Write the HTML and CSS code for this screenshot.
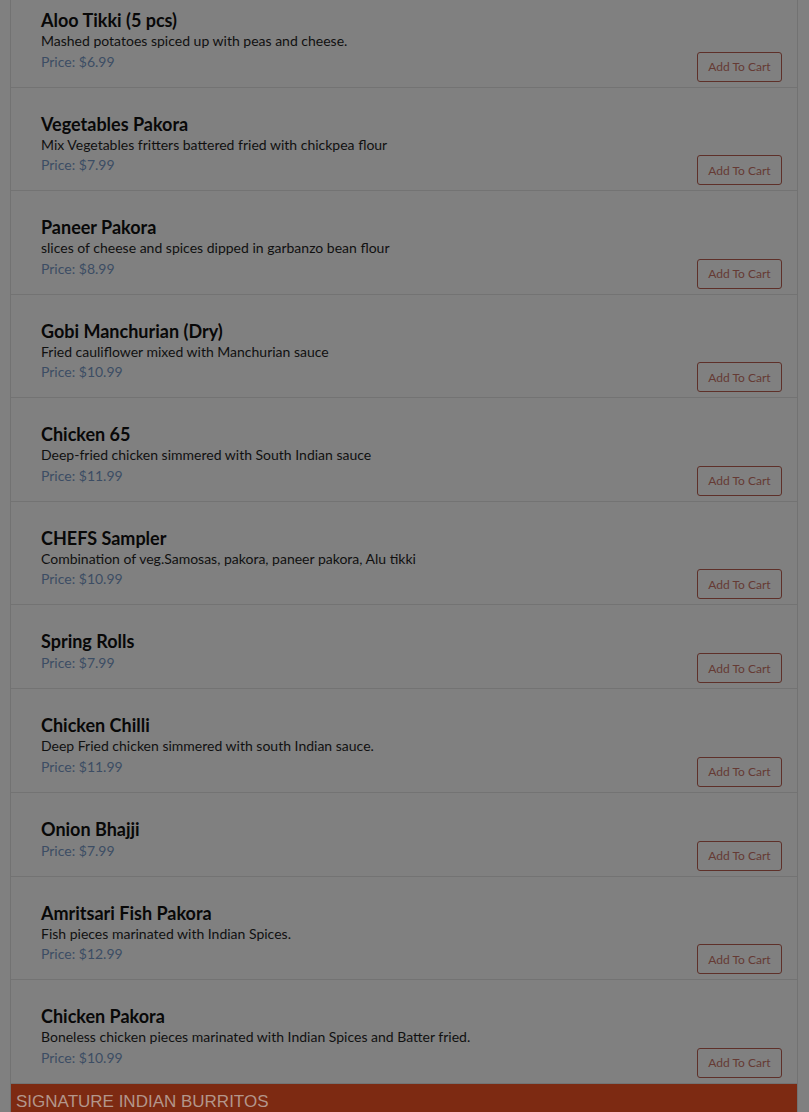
FILE: index.html
```html
<!DOCTYPE html>
<html lang="en">
<head>
<meta charset="utf-8">
<title>Menu</title>
<link rel="stylesheet" href="styles.css">
</head>
<body>
<main class="menu">
  <section class="items">
    <article class="item">
      <div class="info">
        <h3 class="name">Aloo Tikki (5 pcs)</h3>
        <p class="desc">Mashed potatoes spiced up with peas and cheese.</p>
        <p class="price">Price: $6.99</p>
      </div>
      <button class="add">Add To Cart</button>
    </article>
    <article class="item">
      <div class="info">
        <h3 class="name">Vegetables Pakora</h3>
        <p class="desc">Mix Vegetables fritters battered fried with chickpea flour</p>
        <p class="price">Price: $7.99</p>
      </div>
      <button class="add">Add To Cart</button>
    </article>
    <article class="item">
      <div class="info">
        <h3 class="name">Paneer Pakora</h3>
        <p class="desc">slices of cheese and spices dipped in garbanzo bean flour</p>
        <p class="price">Price: $8.99</p>
      </div>
      <button class="add">Add To Cart</button>
    </article>
    <article class="item">
      <div class="info">
        <h3 class="name">Gobi Manchurian (Dry)</h3>
        <p class="desc">Fried cauliflower mixed with Manchurian sauce</p>
        <p class="price">Price: $10.99</p>
      </div>
      <button class="add">Add To Cart</button>
    </article>
    <article class="item">
      <div class="info">
        <h3 class="name">Chicken 65</h3>
        <p class="desc">Deep-fried chicken simmered with South Indian sauce</p>
        <p class="price">Price: $11.99</p>
      </div>
      <button class="add">Add To Cart</button>
    </article>
    <article class="item">
      <div class="info">
        <h3 class="name">CHEFS Sampler</h3>
        <p class="desc">Combination of veg.Samosas, pakora, paneer pakora, Alu tikki</p>
        <p class="price">Price: $10.99</p>
      </div>
      <button class="add">Add To Cart</button>
    </article>
    <article class="item">
      <div class="info">
        <h3 class="name">Spring Rolls</h3>
        <p class="price">Price: $7.99</p>
      </div>
      <button class="add">Add To Cart</button>
    </article>
    <article class="item">
      <div class="info">
        <h3 class="name">Chicken Chilli</h3>
        <p class="desc">Deep Fried chicken simmered with south Indian sauce.</p>
        <p class="price">Price: $11.99</p>
      </div>
      <button class="add">Add To Cart</button>
    </article>
    <article class="item">
      <div class="info">
        <h3 class="name">Onion Bhajji</h3>
        <p class="price">Price: $7.99</p>
      </div>
      <button class="add">Add To Cart</button>
    </article>
    <article class="item">
      <div class="info">
        <h3 class="name">Amritsari Fish Pakora</h3>
        <p class="desc">Fish pieces marinated with Indian Spices.</p>
        <p class="price">Price: $12.99</p>
      </div>
      <button class="add">Add To Cart</button>
    </article>
    <article class="item">
      <div class="info">
        <h3 class="name">Chicken Pakora</h3>
        <p class="desc">Boneless chicken pieces marinated with Indian Spices and Batter fried.</p>
        <p class="price">Price: $10.99</p>
      </div>
      <button class="add">Add To Cart</button>
    </article>
  </section>
  <h2 class="section-title">SIGNATURE INDIAN BURRITOS</h2>
</main>
</body>
</html>
```

FILE: styles.css
```css
html, body {
  margin: 0;
  padding: 0;
  background: #808080;
}
body {
  font-family: "Source Sans Pro", Lato, "Noto Sans", sans-serif;
  color: #0d0d0d;
  overflow: hidden;
}
.menu {
  margin: -16px 11px 0 10px;
  border-left: 1px solid #727272;
  border-right: 1px solid #727272;
}
.items {
  display: flex;
  flex-direction: column;
}
.item {
  display: flex;
  justify-content: space-between;
  align-items: flex-end;
  border-bottom: 1px solid #737373;
  padding: 0 15px 0 30px;
}
.info {
  padding: 26px 0 14px;
}
.name {
  margin: 0;
  font-size: 18px;
  line-height: 21px;
  font-weight: 700;
  color: #080808;
}
.desc {
  margin: 0;
  font-size: 14px;
  line-height: 19.5px;
  color: #101010;
}
.price {
  margin: 0;
  font-size: 14px;
  line-height: 22px;
  color: #3c4d64;
}
.add {
  width: 85px;
  height: 30px;
  margin-bottom: 5px;
  background: transparent;
  border: 1px solid #5e3029;
  border-radius: 3px;
  font-family: inherit;
  font-size: 12px;
  color: #653a34;
  padding: 0;
}
.section-title {
  margin: 0;
  background: #7d2a12;
  color: #b3968b;
  font-family: "Liberation Sans", Arial, sans-serif;
  font-weight: 400;
  font-size: 17px;
  line-height: 36px;
  padding: 0 5px;
}
```
